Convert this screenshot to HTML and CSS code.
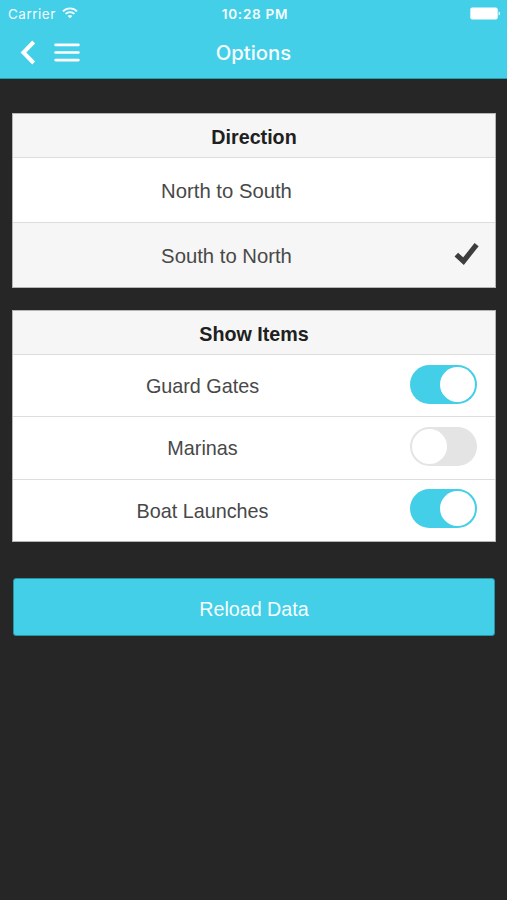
FILE: index.html
```html
<!DOCTYPE html>
<html lang="en">
<head>
<meta charset="utf-8">
<title>Options</title>
<link rel="stylesheet" href="styles.css">
</head>
<body>
<header class="top">
  <div class="status">
    <div class="carrier"><span class="carrier-name">Carrier</span>
      <svg class="wifi" width="16" height="12" viewBox="0 0 16 12" fill="none" stroke="#f4fdff" stroke-width="1.8"><path d="M1 4.3C5 .3 11 .3 15 4.3M3.6 6.9C6 4.5 10 4.5 12.4 6.9"/><path d="M8 11.3 5.6 8.9C7 7.7 9 7.7 10.4 8.9Z" fill="#f4fdff" stroke="none"/></svg>
    </div>
    <span class="time">10:28 PM</span>
    <svg class="battery" width="31" height="13" viewBox="0 0 31 13" fill="#fff"><rect x="0.3" y="0.5" width="27.4" height="12" rx="2"/><path d="M28.6 4.5C30.4 5 30.4 8 28.6 8.5Z"/></svg>
  </div>
  <nav class="bar">
    <div class="nav-icons">
      <svg width="16" height="26" viewBox="0 0 16 26" fill="none" stroke="#fff" stroke-width="4"><path d="M13.7 2 3.4 12.5 13.7 23"/></svg>
      <svg width="26" height="20" viewBox="0 0 26 20" fill="none" stroke="#fff" stroke-width="2.7" stroke-linecap="round"><path d="M1.6 1.9H24.4M1.6 9.5H24.4M1.6 17.1H24.4"/></svg>
    </div>
    <h1 class="title">Options</h1>
    <span></span>
  </nav>
</header>
<main class="content">
  <section class="panel">
    <h2 class="heading">Direction</h2>
    <div class="row tall"><span class="label">North to South</span></div>
    <div class="row tall chosen"><span class="label">South to North</span>
      <svg class="check" width="26" height="24" viewBox="0 0 26 24" fill="none" stroke="#3d3d3d" stroke-width="5.2"><path d="M2.3 12.6 9.5 19.2 22.6 2.6"/></svg>
    </div>
  </section>
  <section class="panel">
    <h2 class="heading">Show Items</h2>
    <div class="row"><span class="label narrow">Guard Gates</span><span class="toggle on"></span></div>
    <div class="row"><span class="label narrow">Marinas</span><span class="toggle"></span></div>
    <div class="row"><span class="label narrow">Boat Launches</span><span class="toggle on"></span></div>
  </section>
  <button class="reload">Reload Data</button>
</main>
</body>
</html>
```

FILE: styles.css
```css
* { box-sizing: border-box; }
body {
  margin: 0;
  min-height: 900px;
  background: #262626;
  color: #484848;
  font-family: "Liberation Sans", Arial, sans-serif;
}
.top {
  height: 79px;
  background: #43cfe7;
  border-bottom: 1px solid #279db0;
  color: #f5fdff;
}
.status, .bar {
  display: grid;
  grid-template-columns: 1fr auto 1fr;
  align-items: center;
}
.status {
  height: 27px;
  padding: 0 6px 0 8px;
  font: 400 13px/27px Inter, sans-serif;
}
.carrier { display: flex; align-items: center; gap: 6px; }
.carrier-name { font-size: 13.5px; letter-spacing: .5px; padding-top: 1px; }
.wifi { margin-top: -2px; }
.time { font-size: 13.5px; font-weight: 600; letter-spacing: .75px; padding: 1px 0 0 1px; }
.battery { justify-self: end; margin-top: -2px; }
.bar { height: 51px; padding: 0 20px; }
.nav-icons { display: flex; align-items: center; gap: 18px; }
.title { margin: 0; font: 500 20.3px/50px Inter, sans-serif; }
.content { padding: 34px 11px 0 12px; }
.panel {
  background: #fff;
  border: 1px solid #b5b5b5;
  margin-bottom: 22px;
}
.heading {
  margin: 0;
  height: 43px;
  padding-top: 1px;
  background: #f6f6f6;
  text-align: center;
  color: #202020;
  font-size: 19.7px;
  line-height: 45px;
}
.row {
  display: flex;
  align-items: center;
  justify-content: space-between;
  height: 62.3px;
  padding-right: 18.5px;
  border-top: 1px solid #ddd;
}
.tall { height: 65px; padding-right: 15px; }
.chosen { background: #f6f6f6; }
.label {
  width: 427px;
  text-align: center;
  font-size: 20.3px;
  line-height: 64px;
  padding-top: 1px;
  flex: none;
}
.narrow { width: 379px; font-size: 19.8px; line-height: 62px; }
.check { margin-top: -3px; }
.toggle {
  display: flex;
  width: 66.5px;
  height: 39px;
  margin-top: -3px;
  padding: 2px;
  border-radius: 20px;
  background: #e4e4e4;
}
.toggle::before {
  content: "";
  width: 35px;
  height: 35px;
  border-radius: 50%;
  background: #fff;
}
.on { background: #43cfe7; justify-content: flex-end; }
.reload {
  display: block;
  width: 482px;
  height: 58px;
  margin: 36px 0 0 1px;
  border: 1px solid #2795a6;
  border-radius: 3px;
  background: #43cfe7;
  color: #f5fdff;
  font: 19.7px/56px "Liberation Sans", Arial, sans-serif;
  padding: 2px 0 0;
}
```
